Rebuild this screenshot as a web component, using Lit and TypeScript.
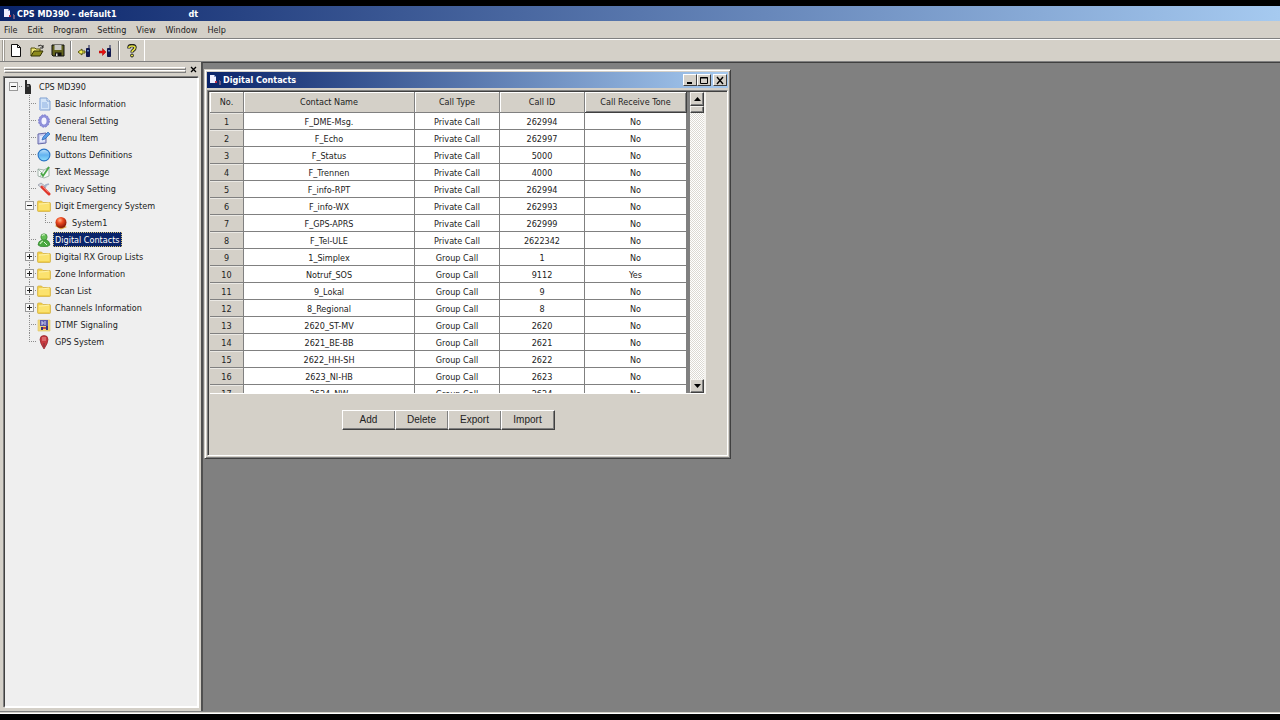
import { LitElement, html, svg, css, TemplateResult } from "lit";
import { customElement } from "lit/decorators.js";
import { classMap } from "lit/directives/class-map.js";

interface Node {
  label: string;
  icon: string;
  level: number;
  expander?: "plus" | "minus";
  selected?: boolean;
  last?: boolean;
}

const nodes: Node[] = [
  { label: "CPS MD390", icon: "radio", level: 0, expander: "minus" },
  { label: "Basic Information", icon: "doc", level: 1 },
  { label: "General Setting", icon: "gear", level: 1 },
  { label: "Menu Item", icon: "menu", level: 1 },
  { label: "Buttons Definitions", icon: "circle", level: 1 },
  { label: "Text Message", icon: "message", level: 1 },
  { label: "Privacy Setting", icon: "tools", level: 1 },
  { label: "Digit Emergency System", icon: "folder", level: 1, expander: "minus" },
  { label: "System1", icon: "alarm", level: 2 },
  { label: "Digital Contacts", icon: "contact", level: 1, selected: true },
  { label: "Digital RX Group Lists", icon: "folder", level: 1, expander: "plus" },
  { label: "Zone Information", icon: "folder", level: 1, expander: "plus" },
  { label: "Scan List", icon: "folder", level: 1, expander: "plus" },
  { label: "Channels Information", icon: "folder", level: 1, expander: "plus" },
  { label: "DTMF Signaling", icon: "dtmf", level: 1 },
  { label: "GPS System", icon: "pin", level: 1, last: true },
];

const contacts: [string, string, string, string][] = [
  ["F_DME-Msg.", "Private Call", "262994", "No"],
  ["F_Echo", "Private Call", "262997", "No"],
  ["F_Status", "Private Call", "5000", "No"],
  ["F_Trennen", "Private Call", "4000", "No"],
  ["F_info-RPT", "Private Call", "262994", "No"],
  ["F_info-WX", "Private Call", "262993", "No"],
  ["F_GPS-APRS", "Private Call", "262999", "No"],
  ["F_Tel-ULE", "Private Call", "2622342", "No"],
  ["1_Simplex", "Group Call", "1", "No"],
  ["Notruf_SOS", "Group Call", "9112", "Yes"],
  ["9_Lokal", "Group Call", "9", "No"],
  ["8_Regional", "Group Call", "8", "No"],
  ["2620_ST-MV", "Group Call", "2620", "No"],
  ["2621_BE-BB", "Group Call", "2621", "No"],
  ["2622_HH-SH", "Group Call", "2622", "No"],
  ["2623_NI-HB", "Group Call", "2623", "No"],
  ["2624_NW", "Group Call", "2624", "No"],
];

const icons: Record<string, TemplateResult> = {
  radio: svg`<path d="M2 0h2v4h3l1 2v8H2z" fill="#2c2c2c"/><path d="M4 5h2v2H4z" fill="#777"/>`,
  doc: svg`<path d="M3 1h7l3 3v9H3z" fill="#d3e4f8" stroke="#7f9fd0"/><path d="M10 1v3h3" fill="#fff" stroke="#7f9fd0"/><path d="M5 6h5M5 8h6M5 10h6" stroke="#8fb1e2"/><path d="M2 4v9h2V3z" fill="#a9c3ea"/>`,
  gear: svg`<ellipse cx="7" cy="7" rx="4" ry="4.8" fill="#e9e9fb" stroke="#8f90da" stroke-width="3"/><ellipse cx="7" cy="7" rx="5.4" ry="6.2" fill="none" stroke="#7b7ccc" stroke-width="1" stroke-dasharray="1.6 1.4"/><ellipse cx="7" cy="7" rx="2.200" ry="3.400" fill="#f4f4ff"/>`,
  menu: svg`<path d="M1 3l8-1v10l-8 1z" fill="#c5c9ef" stroke="#6669a8"/><path d="M3 5l5-.5v6L3 11z" fill="#e6eafc"/><path d="M5 9l1-3 5-5 2 2-5 5z" fill="#5a9be6" stroke="#2b64b4" stroke-width=".7"/>`,
  circle: svg`<defs><linearGradient id="b" x1="0" y1="0" x2="0" y2="1"><stop offset="0" stop-color="#c4e4fb"/><stop offset=".5" stop-color="#62b2f0"/><stop offset="1" stop-color="#8fe0fd"/></linearGradient></defs><circle cx="7" cy="7" r="5.9" fill="url(#b)" stroke="#2873c4" stroke-width="1.1"/>`,
  message: svg`<path d="M1 4l6 1 5-3v9l-5 2-6-2z" fill="#f6faf7" stroke="#8fa59b" stroke-width=".8"/><path d="M1 4l4 4-2 4M7 5l-2 3" fill="none" stroke="#8fa59b" stroke-width=".7"/><path d="M4 8l2 3 6-9" fill="none" stroke="#49a646" stroke-width="1.8"/>`,
  tools: svg`<path d="M1 3l3-2 4 3-2 3z" fill="#d4d7df" stroke="#8f95a3" stroke-width=".7"/><path d="M12 2L9 3 8 6" fill="none" stroke="#a6b2c8" stroke-width="1.8"/><path d="M5 5l7 7" stroke="#e0362b" stroke-width="3" stroke-linecap="round"/><path d="M5.500 4.500l6 6" stroke="#f58d80" stroke-width=".8"/>`,
  folder: svg`<path d="M.5 3q0-1 1-1h3L6 3.500h6.500q1 0 1 1v7q0 1-1 1h-11q-1 0-1-1z" fill="#f0cf4a" stroke="#d3ae3c" stroke-width=".7"/><path d="M1.500 4.500q3 0 5-.6h6V11h-11z" fill="#fbe26e"/><path d="M2 5q5 0 10-1" stroke="#fff2a8" fill="none"/>`,
  alarm: svg`<defs><radialGradient id="a" cx=".4" cy=".3" r=".7"><stop offset="0" stop-color="#ffb28a"/><stop offset=".4" stop-color="#ee4a20"/><stop offset="1" stop-color="#841505"/></radialGradient></defs><path d="M1 10l4-3 8 4-6 2.500z" fill="#d9a440"/><circle cx="7" cy="6.500" r="5.500" fill="url(#a)"/>`,
  contact: svg`<path d="M1 12q0-4 4-5l3-1q5 2 5 6-2 2-6 2-4 0-6-2z" fill="#48a83f" stroke="#2c7b28" stroke-width=".6"/><circle cx="7" cy="4" r="3.200" fill="#63bd55" stroke="#2c7b28" stroke-width=".6"/><path d="M5 3q1-2 3-1M3 11q1-2 3-3" stroke="#c5f0b8" fill="none" stroke-width="1.200"/><path d="M7 9l3 3" stroke="#dff5d8" stroke-width="1"/>`,
  dtmf: svg`<path d="M1 2h12v11H1z" fill="#f2d878" stroke="#e2ca70" stroke-width=".7"/><path d="M3 2h8v6H3z" fill="#5a58a8"/><path d="M5 3v4M8 3v4M5 5h2" stroke="#d8d8f4"/><path d="M4 9h2v3H4zM9 8h2v4H9z" fill="#34347c"/><path d="M6 9h3v2H6z" fill="#c24b42"/>`,
  pin: svg`<path d="M7 14Q3 8 3 4.500a4 4 0 0 1 8 0Q11 8 7 14z" fill="#c73a40" stroke="#8f2129" stroke-width=".7"/><path d="M5 3h4M5 5h4" stroke="#ee9696"/><path d="M7 8v4" stroke="#7c3038"/>`,
};

const tools: Record<string, TemplateResult> = {
  New: svg`<path d="M2.500.5h6l3 3v9h-9z" fill="#fff" stroke="#111"/><path d="M8.500.5v3h3" fill="none" stroke="#111"/>`,
  Open: svg`<path d="M1 12V4h4l1 1h4v2" fill="#f0e878" stroke="#55500a"/><path d="M1 12l3-5h9l-3 5z" fill="#8c8a1c" stroke="#333205"/><path d="M8 2q3-2 5 1M13 1v3h-3" fill="none" stroke="#111" stroke-width=".9"/>`,
  Save: svg`<path d="M1 1h12v11H2l-1-1z" fill="#62621c" stroke="#111"/><path d="M3.500 1h7v5h-7z" fill="#c8c8c4"/><path d="M4 8.500h6.500V12H4z" fill="#111"/><path d="M5 9.500h1.500V12H5z" fill="#ddd"/>`,
  Read: svg`<path d="M0 8l4-3v2h3v2H4v2z" fill="#f4f056" stroke="#4d4b08" stroke-width=".9"/><path d="M11 1v3M8.500 4.500h3v8h-3z" fill="#10184e" stroke="#10184e"/><path d="M9 6h2v1.500H9z" fill="#6289c4"/>`,
  Write: svg`<path d="M7 8L3.500 4.500V7H0v2h3.500v2.500z" fill="#e80f0f" stroke="#a80808" stroke-width=".5"/><path d="M11 1v3M8.500 4.500h3v8h-3z" fill="#10184e" stroke="#10184e"/><path d="M9 6h2v1.500H9z" fill="#6289c4"/>`,
  Help: svg`<path d="M3 4.500V3q0-1.500 3-1.500T9 3.500q0 1.500-1.500 2.500T6 8.500" fill="none" stroke="#222" stroke-width="3.400"/><path d="M3 4V3.500q0-1.500 3-1.500t3 1.500q0 1.500-1.500 2.500T6 8" fill="none" stroke="#e6e242" stroke-width="1.600"/><circle cx="6" cy="11.500" r="1.500" fill="#e6e242" stroke="#222"/>`,
};

const appIcon = html`<svg class="app-icon" viewBox="0 0 14 12" width="14" height="12" aria-hidden="true">
  <path d="M1 1h4l2 2v6H1z" fill="#eef"/><path d="M5 1v2h2z" fill="#8ba0d0"/><path d="M6 7h2v2H6z" fill="#c03048"/><path d="M10 6v5h2V7h-1V6z" fill="#6a5a80"/>
</svg>`;

const base = css`
  :host { box-sizing: border-box; }
  *, *::before, *::after { box-sizing: border-box; }
  button {
    font: inherit;
    color: inherit;
    background: none;
    border: 0;
    margin: 0;
    padding: 0;
    border-radius: 0;
  }
  svg { display: block; flex: none; }
`;

@customElement("cps-tree")
class CpsTree extends LitElement {
  static styles = [base, css`
    :host { display: block; padding: 0 0 0 2px; }
    .list { list-style: none; margin: 0; padding: 0; }
    .item { display: flex; align-items: center; height: 17px; }
    .icon { margin-right: 2px; }
    .icon.root { width: 14px; margin-right: 0; }
    .label { height: 15px; padding: 0 1px; border: 1px solid transparent; line-height: 12px; white-space: nowrap; }
    .label.selected { background: #0a246a; color: #fff; border: 1px dotted #d8c070; }
  `];

  private lines(n: Node) {
    const w = n.level === 0 ? 16 : n.level === 1 ? 30 : 47;
    const bx = n.level === 0 ? 2 : 18;
    const mid = n.level === 0 ? 6 : n.level === 1 ? 22 : 38;
    return html`<svg width=${w} height="17" viewBox="0 0 ${w} 17" aria-hidden="true" shape-rendering="crispEdges">
      <g stroke="#8c8c8c" stroke-dasharray="1 1" fill="none">
        ${n.level > 0 ? svg`<path d="M22.500 0V${n.last ? 9 : 17}"/>` : null}
        ${n.level === 2 ? svg`<path d="M38.500 0V9"/>` : null}
        <path d="M${mid} 8.500H${w - 1}"/>
      </g>
      ${n.expander ? svg`<rect x="${bx + 0.5}" y="4.500" width="8" height="8" fill="#f8f8f8" stroke="#999"/>
        <path d="M${bx + 2} 8.500h5${n.expander === "plus" ? `M${bx + 4.5} 6v5` : ""}" stroke="#222"/>` : null}
    </svg>`;
  }

  render() {
    return html`<ul class="list" role="tree" aria-label="Settings">
      ${nodes.map((n) => html`<li class="item" role="treeitem" aria-level=${n.level + 1}>
        ${this.lines(n)}
        <svg class=${classMap({ icon: true, root: n.level === 0 })} width="14" height="14" viewBox="0 0 14 14" aria-hidden="true">${icons[n.icon]}</svg>
        <button class=${classMap({ label: true, selected: !!n.selected })}>${n.label}</button>
      </li>`)}
    </ul>`;
  }
}

@customElement("cps-contacts")
class CpsContacts extends LitElement {
  static styles = [base, css`
    :host {
      display: block;
      background: #d4d0c8;
      border: 1px solid #d4d0c8;
      border-right-color: #404040;
      border-bottom-color: #404040;
      box-shadow: inset 1px 1px #fff, inset -1px -1px #808080;
      padding: 2px;
    }
    .title {
      display: flex;
      align-items: center;
      height: 16px;
      padding: 0 1px 0 2px;
      background: linear-gradient(90deg, #0a246a, #a6caf0);
      color: #fff;
      font-weight: bold;
      line-height: 16px;
    }
    .caption { flex: 1; margin: 0; font-size: inherit; }
    .controls { display: flex; }
    .control {
      display: grid;
      place-items: center;
      width: 14px;
      height: 12px;
      color: #000;
      background: #d4d0c8;
      border: 1px solid #fff;
      border-right-color: #404040;
      border-bottom-color: #404040;
    }
    .close { margin-left: 2px; }
    .client {
      margin-top: 2px;
      border: 1px solid #808080;
      border-right-color: #fff;
      border-bottom-color: #fff;
      box-shadow: inset 1px 1px #404040;
      padding: 1px 21px 25px 2px;
    }
    .grid {
      display: flex;
      height: 302px;
      overflow: hidden;
      background: #808080;
      border-right: 2px solid #f4f2ee;
      border-bottom: 1px solid #fff;
    }
    .table { flex: 1; width: 100%; table-layout: fixed; border-collapse: separate; border-spacing: 0; }
    .pane { flex: 1; margin-right: 3px; overflow: hidden; }
    .no { width: 34px; }
    .name { width: 171px; }
    .mid { width: 85px; }
    .table th, .table td {
      height: 17px;
      padding: 2px 0 0;
      border-right: 1px solid #808080;
      border-bottom: 1px solid #808080;
      font-weight: normal;
      text-align: center;
      line-height: 14px;
      background: #fff;
      white-space: nowrap;
    }
    .table .head { height: 21px; padding: 0; line-height: 20px; background: #d4d0c8; box-shadow: inset 1px 1px #fff; }
    .table .head.current { border-color: #404040; box-shadow: inset 1px 1px #fff, inset -1px -1px #808080; }
    .table .index { background: #d4d0c8; box-shadow: inset 0 1px #ebe9e4; }
    .scroll {
      display: flex;
      flex-direction: column;
      width: 14px;
      background: repeating-conic-gradient(#fff 0 25%, #dcd9d2 0 50%) 0 0 / 2px 2px;
    }
    .arrow, .thumb {
      display: grid;
      place-items: center;
      width: 14px;
      height: 14px;
      background: #d4d0c8;
      border: 1px solid #f4f2ee;
      border-right-color: #404040;
      border-bottom-color: #404040;
      box-shadow: inset -1px -1px #808080;
    }
    .thumb { height: 7px; }
    .rest { flex: 1; }
    .actions { display: flex; justify-content: center; margin-top: 16px; padding-right: 20px; }
    .action {
      width: 54px;
      height: 20px;
      background: #d4d0c8;
      border: 1px solid #fff;
      border-right-color: #404040;
      border-bottom-color: #404040;
      box-shadow: inset -1px -1px #808080;
      font-family: "Liberation Sans", sans-serif;
      font-size: 10px;
      line-height: 18px;
      text-align: center;
    }
    .action + .action { margin-left: -1px; }
  `];

  render() {
    return html`
      <div class="title">
        ${appIcon}
        <h2 class="caption">Digital Contacts</h2>
        <div class="controls">
          <button class="control" aria-label="Minimize"><svg width="10" height="9"><path d="M2 7h5" stroke="#000" stroke-width="2"/></svg></button>
          <button class="control" aria-label="Maximize"><svg width="10" height="9"><path d="M1.500 1.500h7v6h-7zM1 2h8" fill="none" stroke="#000"/></svg></button>
          <button class="control close" aria-label="Close"><svg width="10" height="9"><path d="M2 1l6 7M8 1L2 8" stroke="#000" stroke-width="1.400"/></svg></button>
        </div>
      </div>
      <div class="client">
        <div class="grid">
          <div class="pane">
            <table class="table">
              <colgroup><col class="no"><col class="name"><col class="mid"><col class="mid"><col></colgroup>
              <thead><tr>
                <th class="head">No.</th><th class="head">Contact Name</th><th class="head">Call Type</th>
                <th class="head">Call ID</th><th class="head current">Call Receive Tone</th>
              </tr></thead>
              <tbody>
                ${contacts.map((row, i) => html`<tr><th class="index">${i + 1}</th>${row.map((c) => html`<td>${c}</td>`)}</tr>`)}
              </tbody>
            </table>
          </div>
          <div class="scroll">
            <button class="arrow" aria-label="Scroll up"><svg width="7" height="4"><path d="M3.500 0L7 4H0z"/></svg></button>
            <div class="thumb"></div>
            <div class="rest"></div>
            <button class="arrow" aria-label="Scroll down"><svg width="7" height="4"><path d="M3.500 4L7 0H0z"/></svg></button>
          </div>
        </div>
        <div class="actions">
          ${["Add", "Delete", "Export", "Import"].map((a) => html`<button class="action">${a}</button>`)}
        </div>
      </div>`;
  }
}

@customElement("app-root")
class AppRoot extends LitElement {
  static styles = [base, css`
    :host {
      display: flex;
      flex-direction: column;
      height: 100vh;
      padding: 6px 0;
      overflow: hidden;
      background: #000;
      color: #222;
      font: 9px/12px "DejaVu Sans Condensed", "DejaVu Sans", sans-serif;
    }
    .titlebar {
      display: flex;
      align-items: center;
      height: 15px;
      padding-left: 3px;
      background: linear-gradient(90deg, #0a246a, #a6caf0);
      color: #fff;
    }
    .caption { margin: 0; font-size: inherit; font-weight: bold; }
    .user { margin-left: 72px; font-weight: bold; }
    .menubar {
      display: flex;
      gap: 10px;
      height: 18px;
      padding: 0 4px;
      background: #d4d0c8;
      border-bottom: 1px solid #808080;
    }
    .toolbar {
      display: flex;
      align-items: stretch;
      height: 23px;
      padding-left: 3px;
      background: #d4d0c8;
      border-top: 1px solid #fff;
      border-bottom: 1px solid #808080;
    }
    .group { display: flex; align-items: center; padding: 0 1px; border-left: 1px solid #fff; border-right: 1px solid #fff; box-shadow: inset 1px 0 #a09c94, -1px 0 #a09c94; }
    .tool { display: grid; place-items: center; width: 21px; height: 20px; }
    .sep { width: 2px; height: 19px; margin: 0 2px; border-left: 1px solid #808080; border-right: 1px solid #fff; }
    .body { display: flex; flex: 1; min-height: 0; }
    .side {
      display: flex;
      flex-direction: column;
      flex: none;
      width: 201px;
      padding: 3px 2px 3px 4px;
      background: #d4d0c8;
    }
    .grip { display: flex; align-items: center; gap: 4px; height: 9px; padding-right: 2px; }
    .bars { flex: 1; display: grid; }
    .bar { height: 3px; border: 1px solid #fff; border-right-color: #808080; border-bottom-color: #808080; }
    .x { width: 7px; height: 7px; }
    .well {
      flex: 1;
      margin-top: 3px;
      background: #efefef;
      border: 1px solid #404040;
      border-right: 2px solid #fff;
      border-bottom: 2px solid #fff;
      box-shadow: -1px -1px #808080;
    }
    .desk {
      position: relative;
      flex: 1;
      background: #808080;
      border-left: 2px solid #505050;
      border-top: 1px solid #404040;
    }
    .window { position: absolute; left: 1px; top: 6px; width: 527px; }
    .status { height: 3px; background: #d4d0c8; border-top: 1px solid #808080; border-bottom: 1px solid #fff; }
  `];

  render() {
    const tool = (name: string) => html`<button class="tool" aria-label=${name}>
      <svg width="14" height="14" viewBox="0 0 14 14">${tools[name]}</svg></button>`;
    return html`
      <header class="titlebar">
        ${appIcon}
        <h1 class="caption">CPS MD390 - default1</h1>
        <span class="user">dt</span>
      </header>
      <nav class="menubar">
        ${["File", "Edit", "Program", "Setting", "View", "Window", "Help"].map((m) => html`<button>${m}</button>`)}
      </nav>
      <div class="toolbar">
        <div class="group">
          ${tool("New")}${tool("Open")}${tool("Save")}<span class="sep"></span>
          ${tool("Read")}${tool("Write")}<span class="sep"></span>${tool("Help")}
        </div>
      </div>
      <main class="body">
        <aside class="side">
          <div class="grip">
            <div class="bars"><div class="bar"></div><div class="bar"></div></div>
            <button class="x" aria-label="Close panel"><svg width="7" height="7"><path d="M1 1l5 5M6 1L1 6" stroke="#000" stroke-width="1.300"/></svg></button>
          </div>
          <div class="well"><cps-tree></cps-tree></div>
        </aside>
        <section class="desk"><cps-contacts class="window"></cps-contacts></section>
      </main>
      <div class="status"></div>`;
  }
}
